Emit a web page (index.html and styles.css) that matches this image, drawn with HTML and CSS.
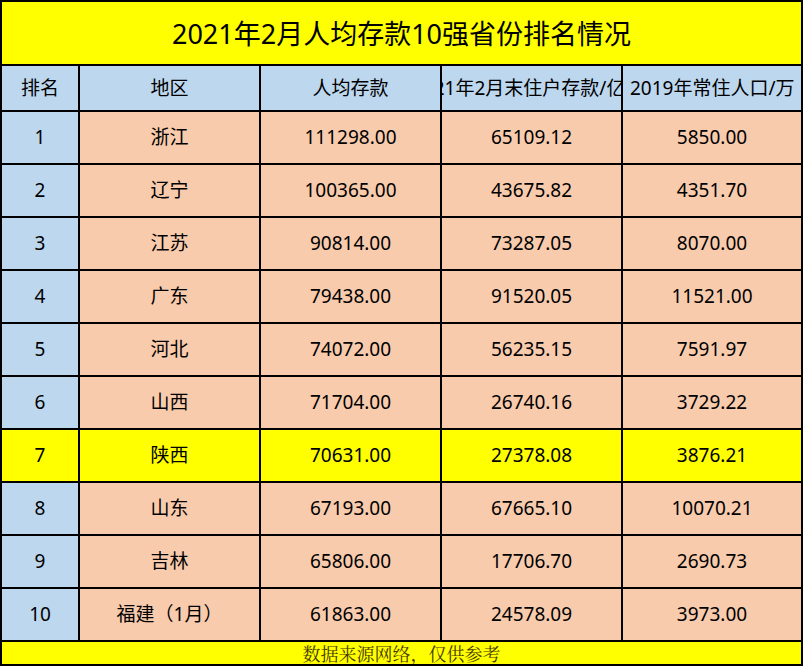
FILE: index.html
```html
<!DOCTYPE html>
<html lang="zh-CN">
<head>
<meta charset="utf-8">
<title>2021年2月人均存款10强省份排名情况</title>
<link rel="stylesheet" href="styles.css">
</head>
<body>
<div class="sheet">
  <div class="cell title">2021年2月人均存款10强省份排名情况</div>

  <div class="cell head">排名</div>
  <div class="cell head">地区</div>
  <div class="cell head">人均存款</div>
  <div class="cell head clip"><span class="deposit">2021年2月末住户存款/亿元</span></div>
  <div class="cell head clip"><span class="people">2019年常住人口/万</span></div>

  <div class="cell rank">1</div><div class="cell">浙江</div><div class="cell">111298.00</div><div class="cell">65109.12</div><div class="cell">5850.00</div>
  <div class="cell rank">2</div><div class="cell">辽宁</div><div class="cell">100365.00</div><div class="cell">43675.82</div><div class="cell">4351.70</div>
  <div class="cell rank">3</div><div class="cell">江苏</div><div class="cell">90814.00</div><div class="cell">73287.05</div><div class="cell">8070.00</div>
  <div class="cell rank">4</div><div class="cell">广东</div><div class="cell">79438.00</div><div class="cell">91520.05</div><div class="cell">11521.00</div>
  <div class="cell rank">5</div><div class="cell">河北</div><div class="cell">74072.00</div><div class="cell">56235.15</div><div class="cell">7591.97</div>
  <div class="cell rank">6</div><div class="cell">山西</div><div class="cell">71704.00</div><div class="cell">26740.16</div><div class="cell">3729.22</div>
  <div class="cell rank hl">7</div><div class="cell hl">陕西</div><div class="cell hl">70631.00</div><div class="cell hl">27378.08</div><div class="cell hl">3876.21</div>
  <div class="cell rank">8</div><div class="cell">山东</div><div class="cell">67193.00</div><div class="cell">67665.10</div><div class="cell">10070.21</div>
  <div class="cell rank">9</div><div class="cell">吉林</div><div class="cell">65806.00</div><div class="cell">17706.70</div><div class="cell">2690.73</div>
  <div class="cell rank">10</div><div class="cell">福建（1月）</div><div class="cell">61863.00</div><div class="cell">24578.09</div><div class="cell">3973.00</div>

  <div class="cell foot">数据来源网络，仅供参考</div>
</div>
</body>
</html>
```

FILE: styles.css
```css
html, body {
  margin: 0;
  padding: 0;
  background: #ffffff;
}

.sheet {
  width: 803px;
  height: 666px;
  box-sizing: border-box;
  padding: 2px;
  background: #000000;
  display: grid;
  grid-template-columns: 76px 179px 179px 179px 178px;
  grid-template-rows: 62px 44px repeat(10, 51px) 22px;
  gap: 2px;
  font-family: "Noto Sans", "Noto Sans CJK SC", sans-serif;
  font-size: 19px;
  color: #000000;
}

.cell {
  display: flex;
  align-items: center;
  justify-content: center;
  background: #f8cbad;
  white-space: nowrap;
  overflow: hidden;
  line-height: 1;
}

.title {
  grid-column: 1 / -1;
  background: #ffff00;
  font-size: 27px;
}

.head {
  background: #bdd7ee;
}

.clip {
  justify-content: flex-start;
}

.clip span {
  flex: none;
}

.deposit {
  margin-left: -30px;
}

.people {
  margin-left: 7px;
}

.rank {
  background: #bdd7ee;
}

.hl {
  background: #ffff00;
}

.foot {
  grid-column: 1 / -1;
  background: #ffff00;
  font-family: "Noto Serif CJK SC", "AR PL UMing CN", "Liberation Serif", serif;
  font-size: 18px;
  color: #463a00;
}
```
